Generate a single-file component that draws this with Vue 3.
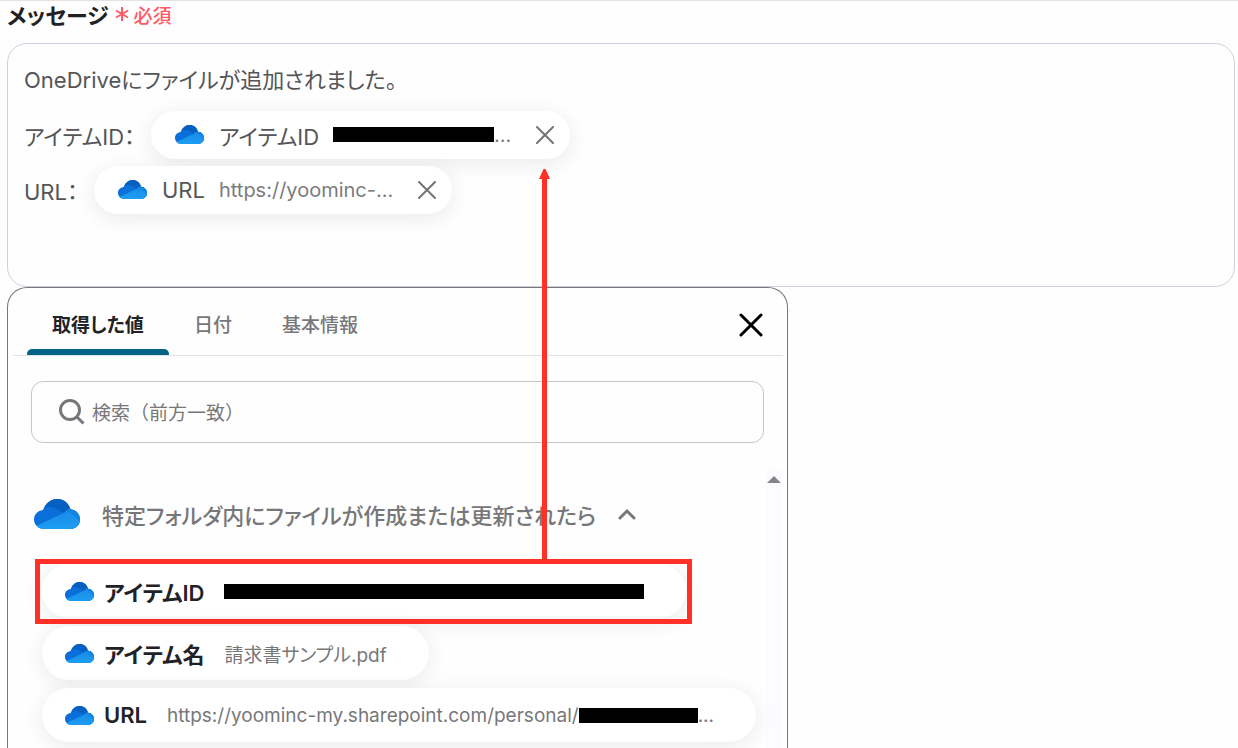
<script setup>
import { ref } from 'vue'

const activeTab = ref('values')
const search = ref('')
const open = ref(true)

const tabs = [
  { id: 'values', label: '取得した値' },
  { id: 'date', label: '日付' },
  { id: 'basic', label: '基本情報' },
]

const items = [
  { label: 'アイテムID', text: '', mask: 'long', tail: '', highlighted: true },
  { label: 'アイテム名', text: '請求書サンプル.pdf', mask: '', tail: '' },
  { label: 'URL', text: 'https://yoominc-my.sharepoint.com/personal/', mask: 'short', tail: '...' },
]
</script>

<template>
  <svg class="defs" aria-hidden="true">
    <defs>
      <clipPath id="cloud-clip">
        <path d="M10 30C4.500 30 0 25.800 0 20.500C0 15.500 3.500 11.700 9 11C11.800 4.300 16.500 0 23.500 0C29.600 0 34.500 3.600 36.500 10.500C42 11 46 14.700 46 20.500C46 26 41.700 30 36 30Z" />
      </clipPath>
      <linearGradient id="cloud-light" x1="0" y1="0" x2="0" y2="1">
        <stop offset="0" stop-color="#1a8be6" />
        <stop offset="1" stop-color="#1ca0f5" />
      </linearGradient>
      <symbol id="cloud" viewBox="0 0 46 30">
        <g clip-path="url(#cloud-clip)">
          <rect width="46" height="30" fill="#0a6fd8" />
          <path d="M10 9Q16 6 23 10L36 18L48 10V-2H8Z" fill="#0660c2" />
          <path d="M27 16L35 9.500L48 8V30H30Z" fill="#1285e0" />
          <path d="M2 27L34 12L48 24V32H2Z" fill="url(#cloud-light)" />
        </g>
      </symbol>
    </defs>
  </svg>

  <main class="page">
    <div class="field-title">
      <span id="message-label" class="field-name">メッセージ</span>
      <span class="required">
        <svg class="asterisk" viewBox="0 0 14 14" aria-hidden="true">
          <path d="M7 0V14M1 3.500L13 10.500M13 3.500L1 10.500" />
        </svg>
        必須
      </span>
    </div>

    <div class="message" role="textbox" aria-multiline="true" aria-labelledby="message-label">
      <div class="line">OneDriveにファイルが追加されました。</div>
      <div class="line">
        <span>アイテムID：</span>
        <span class="token">
          <svg class="cloud-small"><use href="#cloud" /></svg>
          <span class="token-name">アイテムID</span>
          <span class="token-value"><i class="mask mask-mid"></i>...</span>
          <button class="remove" type="button" aria-label="アイテムIDを削除">
            <svg viewBox="0 0 18 18"><path d="M1 1L17 17M17 1L1 17" /></svg>
          </button>
        </span>
      </div>
      <div class="line">
        <span>URL：</span>
        <span class="token">
          <svg class="cloud-small"><use href="#cloud" /></svg>
          <span class="token-name">URL</span>
          <span class="token-value">https://yoominc-...</span>
          <button class="remove" type="button" aria-label="URLを削除">
            <svg viewBox="0 0 18 18"><path d="M1 1L17 17M17 1L1 17" /></svg>
          </button>
        </span>
      </div>
    </div>

    <section class="panel">
      <header class="panel-head">
        <div class="tabs" role="tablist">
          <button
            v-for="tab in tabs"
            :key="tab.id"
            type="button"
            role="tab"
            class="tab"
            :class="{ active: tab.id === activeTab }"
            :aria-selected="tab.id === activeTab"
            @click="activeTab = tab.id"
          >{{ tab.label }}</button>
        </div>
        <button class="close" type="button" aria-label="閉じる">
          <svg viewBox="0 0 24 24"><path d="M2 2L22 22M22 2L2 22" /></svg>
        </button>
      </header>

      <label class="search">
        <svg viewBox="0 0 26 26" aria-hidden="true">
          <circle cx="11" cy="11" r="9.500" /><path d="M18 18L24.500 24.500" />
        </svg>
        <input v-model="search" type="text" placeholder="検索（前方一致）" aria-label="検索（前方一致）" />
      </label>

      <div class="results">
        <div class="list">
          <button class="group" type="button" :aria-expanded="open" @click="open = !open">
            <svg class="cloud-large"><use href="#cloud" /></svg>
            <span>特定フォルダ内にファイルが作成または更新されたら</span>
            <svg class="chevron" viewBox="0 0 18 12" aria-hidden="true"><path d="M2 10L9 3L16 10" /></svg>
          </button>
          <div v-if="open" class="items">
            <div v-for="item in items" :key="item.label" class="row" :class="{ highlighted: item.highlighted }">
              <button class="item" type="button">
                <svg class="cloud-small"><use href="#cloud" /></svg>
                <span class="item-name">{{ item.label }}</span>
                <span class="item-value">{{ item.text }}<i v-if="item.mask" class="mask" :class="'mask-' + item.mask"></i>{{ item.tail }}</span>
              </button>
            </div>
          </div>
        </div>
        <div class="track" aria-hidden="true">
          <svg viewBox="0 0 14 7"><path d="M0 7L7 0L14 7Z" /></svg>
        </div>
      </div>
    </section>

    <svg class="arrow" viewBox="0 0 11 390" aria-hidden="true">
      <path d="M3 10V390H8V10H11L6.500 0H4.500L0 10Z" />
    </svg>
  </main>
</template>

<style>
body {
  margin: 0;
  background: #fefefe;
}
</style>

<style scoped>
.defs {
  position: absolute;
  width: 0;
  height: 0;
}

.page {
  position: relative;
  box-sizing: border-box;
  display: flex;
  flex-direction: column;
  min-height: 100vh;
  padding: 0 3px 0 7px;
  border-top: 1px solid #e2e2e2;
  color: #555558;
  font-family: Inter, "Noto Sans CJK JP", sans-serif;
  font-feature-settings: "palt";
}

button {
  margin: 0;
  padding: 0;
  border: 0;
  background: none;
  color: inherit;
  font: inherit;
  font-feature-settings: inherit;
  cursor: pointer;
}

.field-title {
  display: flex;
  align-items: center;
  gap: 6px;
  height: 26px;
  margin-bottom: 16px;
}

.field-name {
  color: #222226;
  font-size: 22px;
  font-weight: 600;
}

.required {
  display: flex;
  align-items: center;
  gap: 5px;
  color: #ff5a66;
  font-size: 19px;
  font-weight: 500;
}

.asterisk {
  width: 14px;
  height: 14px;
  fill: none;
  stroke: currentColor;
  stroke-width: 2;
}

.message {
  box-sizing: border-box;
  min-height: 244px;
  padding: 16px;
  border: 1px solid #cfd0de;
  border-radius: 20px;
  font-size: 22px;
}

.line {
  display: flex;
  align-items: center;
  height: 55px;
}

.line:first-child {
  height: 36px;
  margin-bottom: 11px;
}

.token {
  display: flex;
  align-items: center;
  height: 48px;
  margin-left: 16px;
  padding: 0 16px 0 24px;
  border-radius: 24px;
  background: #fff;
  box-shadow: 0 4px 20px rgba(40, 30, 60, 0.09);
}

.cloud-small {
  flex: none;
  width: 29px;
  height: 19px;
}

.token-name {
  margin: 0 14px 0 15px;
}

.token-value {
  display: flex;
  align-items: center;
  color: #7b7b7e;
  font-size: 20px;
}

.remove {
  display: flex;
  margin-left: 25px;
}

.remove svg {
  width: 18px;
  height: 18px;
  fill: none;
  stroke: #747478;
  stroke-width: 2;
  stroke-linecap: round;
}

.mask {
  flex: none;
  height: 15px;
  background: #000;
}

.mask-mid {
  width: 161px;
}

.mask-long {
  width: 420px;
}

.mask-short {
  width: 119px;
}

.panel {
  box-sizing: border-box;
  display: flex;
  flex: 1;
  flex-direction: column;
  width: 100%;
  max-width: 781px;
  border: 1px solid #77777a;
  border-bottom: 0;
  border-radius: 20px 20px 0 0;
}

.panel-head {
  display: flex;
  align-items: center;
  justify-content: space-between;
  height: 67px;
  margin: 0 4px 0 5px;
  padding: 0 20px 0 14px;
  border-bottom: 1px solid #e3e3e6;
}

.tabs {
  display: flex;
  align-self: stretch;
}

.tab {
  position: relative;
  padding: 4px 25px 0;
  color: #777779;
  font-size: 19px;
  font-weight: 500;
}

.tab.active {
  color: #222226;
  font-weight: 600;
}

.tab.active::after {
  content: "";
  position: absolute;
  right: 0;
  bottom: 0;
  left: 0;
  height: 6px;
  border-radius: 5px 5px 0 0;
  background: #046285;
}

.close {
  display: flex;
  padding-top: 6px;
}

.close svg {
  width: 24px;
  height: 24px;
  fill: none;
  stroke: #000;
  stroke-width: 3;
  stroke-linecap: round;
}

.search {
  display: flex;
  align-items: center;
  gap: 7px;
  height: 60px;
  margin: 25px 23px 26px;
  padding: 0 27px;
  border: 1px solid #c6c6c9;
  border-radius: 12px;
}

.search svg {
  flex: none;
  width: 26px;
  height: 26px;
  fill: none;
  stroke: #77777a;
  stroke-width: 3;
}

.search input {
  flex: 1;
  min-width: 0;
  padding: 2px 0 0;
  border: 0;
  outline: 0;
  background: none;
  color: #555558;
  font: inherit;
  font-size: 19px;
  font-feature-settings: normal;
}

.search input::placeholder {
  color: #777779;
  opacity: 1;
}

.results {
  display: flex;
  flex: 1;
  margin-right: 5px;
}

.list {
  flex: 1;
  min-width: 0;
  padding: 21px 0 5px 26px;
}

.group {
  display: flex;
  align-items: center;
  height: 48px;
  color: #777779;
  font-size: 22px;
  font-weight: 500;
}

.cloud-large {
  width: 46px;
  height: 30px;
  margin-right: 22px;
}

.chevron {
  width: 18px;
  height: 12px;
  margin-left: 22px;
  fill: none;
  stroke: currentColor;
  stroke-width: 3;
  stroke-linecap: round;
}

.items {
  display: flex;
  flex-direction: column;
  align-items: flex-start;
  gap: 8px;
  padding: 26px 0 0 8px;
}

.row {
  position: relative;
}

.row.highlighted::after {
  content: "";
  position: absolute;
  inset: -5px -6px -6px -7px;
  border: 5px solid #ff3026;
  pointer-events: none;
}

.item {
  display: flex;
  align-items: center;
  height: 54px;
  padding: 0 42px 0 23px;
  border-radius: 27px;
  background: #fff;
  box-shadow: 0 4px 20px rgba(40, 30, 60, 0.09);
}

.item-name {
  margin: 0 20px 0 10px;
  color: #222226;
  font-size: 22px;
  font-weight: 600;
}

.item-value {
  display: flex;
  align-items: center;
  color: #777779;
  font-size: 19px;
}

.track {
  width: 16px;
  padding-top: 7px;
  background: #fcfbfe;
}

.track svg {
  display: block;
  width: 14px;
  height: 7px;
  margin: 0 1px;
  fill: #858588;
}

.arrow {
  position: absolute;
  top: 168px;
  left: 539px;
  width: 11px;
  height: 390px;
  fill: #ff3026;
}
</style>
